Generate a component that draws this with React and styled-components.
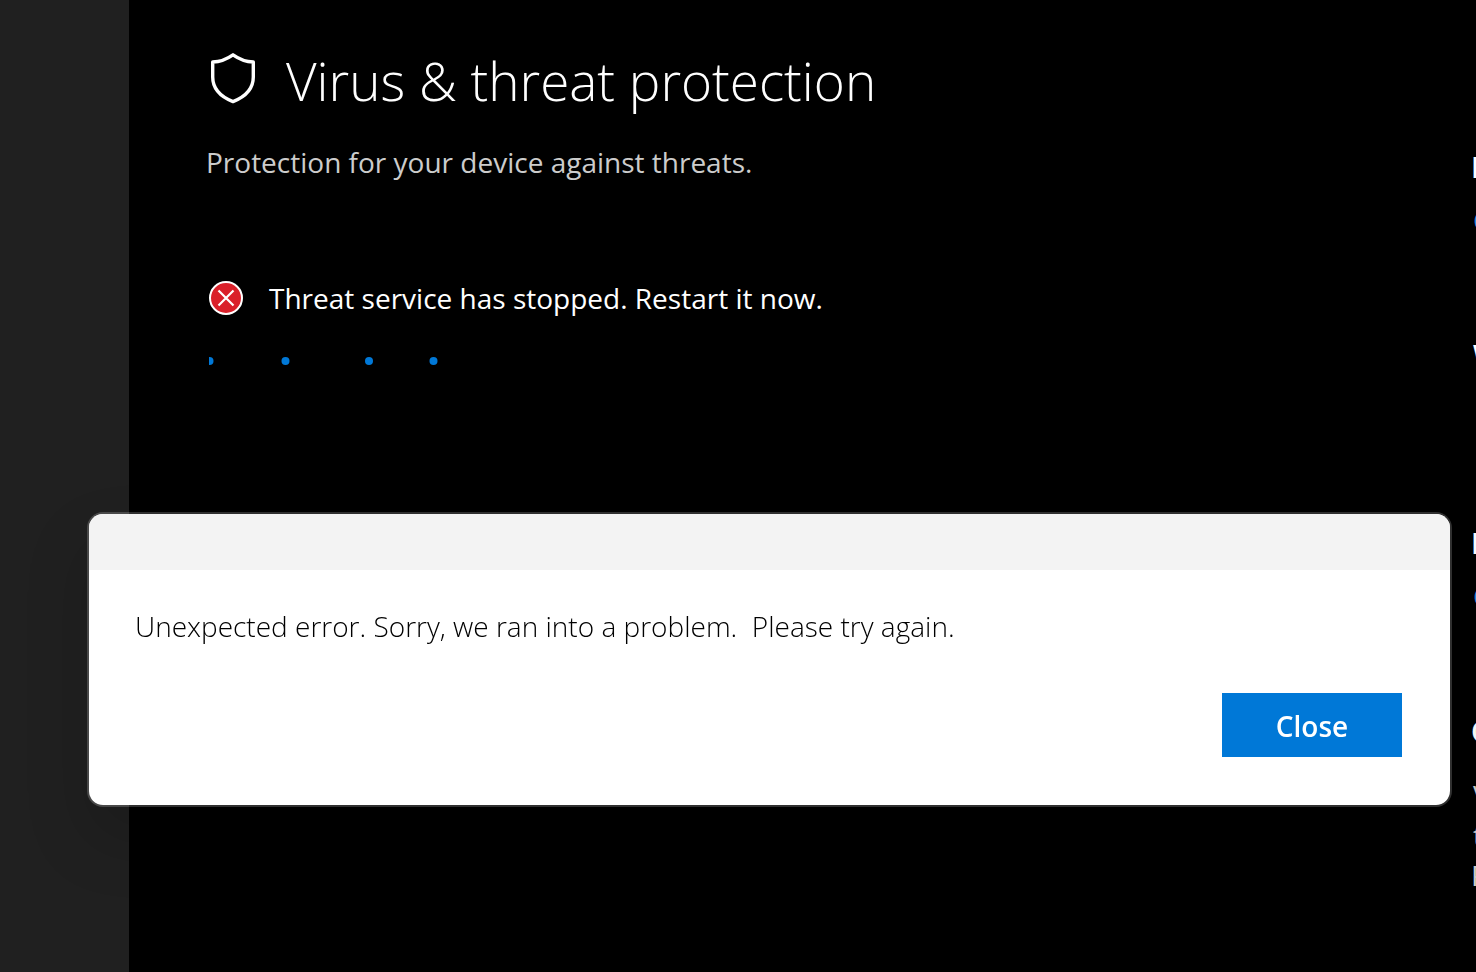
import React from "react";
import styled, { createGlobalStyle } from "styled-components";
import { useState } from "react";

const GlobalStyle = createGlobalStyle`
  * {
    box-sizing: border-box;
  }
  body {
    margin: 0;
    background: #000000;
    color: #ffffff;
    font-family: "Open Sans", "Noto Sans", sans-serif;
  }
  h1, p {
    margin: 0;
    font-weight: 400;
  }
`;

const Page = styled.div`
  display: flex;
  height: 100vh;
  overflow: hidden;
`;
const Sidebar = styled.nav`
  flex: none;
  width: 129px;
  background: #202020;
`;
const Main = styled.main`
  flex: 1;
  min-width: 0;
  padding: 40px 0 0 77px;
`;
const Header = styled.header`
  display: flex;
  align-items: center;
  gap: 26px;
  height: 80px;
`;
const Title = styled.h1`
  && {
    font-weight: 300;
  }
  padding-top: 2px;
  font-size: 53px;
  line-height: 80px;
  white-space: nowrap;
`;
const Subtitle = styled.p`
  margin-top: 22px;
  font-size: 28px;
  line-height: 40px;
  color: #cccccc;
`;
const Status = styled.section`
  margin-top: 96px;
  padding-left: 2px;
`;
const StatusRow = styled.div`
  display: flex;
  align-items: center;
  gap: 25px;
`;
const StatusText = styled.p`
  font-size: 28px;
  line-height: 40px;
`;
const Progress = styled.svg`
  display: block;
  width: 100%;
  height: 8px;
  margin: 39px 0 0 1px;
`;

const Aside = styled.aside`
  flex: none;
  width: 5px;
  padding-top: 147px;
  overflow: hidden;
`;
const AsideItem = styled.div`
  height: 40px;
  margin-bottom: ${(props) => props.$after}px;
  padding-left: ${(props) => props.$indent || 0}px;
  font-size: 28px;
  font-weight: ${(props) => (props.$heading ? 600 : 400)};
  line-height: 40px;
  color: ${(props) =>
    props.$heading ? "#ffffff" : props.$link ? "#2a8fd8" : "#cccccc"};
`;

const Dialog = styled.div`
  position: fixed;
  top: 512px;
  left: 87px;
  right: 24px;
  border: 2px solid #ffffff30;
  border-radius: 16px;
  background: #ffffff;
  background-clip: padding-box;
  box-shadow: 0 32px 64px rgba(0, 0, 0, 0.16);
  overflow: hidden;
`;
const DialogBar = styled.div`
  height: 56px;
  background: #f3f3f3;
`;
const DialogBody = styled.div`
  display: flex;
  flex-direction: column;
  gap: 47px;
  padding: 36px 48px 48px 46px;
`;
const Message = styled.p`
  && {
    font-weight: 300;
  }
  font-size: 28px;
  line-height: 40px;
  color: #000000;
  white-space: pre-wrap;
`;
const CloseButton = styled.button`
  align-self: flex-end;
  width: 180px;
  height: 64px;
  padding: 2px 0 0;
  border: none;
  background: #0078d7;
  color: #ffffff;
  font-family: inherit;
  font-size: 28px;
  font-weight: 600;
  cursor: pointer;
`;

const asideItems = [
  { text: "H", heading: true, after: 13 },
  { text: "G", link: true, indent: 2, after: 95 },
  { text: "W", heading: true, indent: 2, after: 148 },
  { text: "H", heading: true, after: 13 },
  { text: "G", link: true, indent: 2, after: 95 },
  { text: "C", heading: true, after: 24 },
  { text: "V", indent: 2, after: 0 },
  { text: "t", indent: 2, after: 0 },
  { text: "P", after: 0 },
];

function Shield() {
  return (
    <svg width="54" height="54" viewBox="0 0 54 54" fill="none" aria-hidden="true">
      <path
        d="M27 1.8C21 6 13.5 8.8 6.7 9V24C6.7 35.5 14 43.5 27 48.6C40 43.5 47.3 35.5 47.3 24V9C40.5 8.8 33 6 27 1.8Z"
        stroke="#ffffff"
        strokeWidth="3.4"
        strokeLinejoin="round"
      />
    </svg>
  );
}

function ErrorIcon() {
  return (
    <svg width="36" height="36" viewBox="0 0 36 36" aria-hidden="true">
      <circle cx="18" cy="18" r="16" fill="#da202a" stroke="#ffffff" strokeWidth="2" />
      <path d="M10.5 10.5L25.5 25.5M25.5 10.5L10.5 25.5" stroke="#ffffff" strokeWidth="2.2" />
    </svg>
  );
}

export default function App() {
  const [open, setOpen] = useState(true);

  return (
    <>
      <GlobalStyle />
      <Page>
        <Sidebar />
        <Main>
          <Header>
            <Shield />
            <Title>Virus &amp; threat protection</Title>
          </Header>
          <Subtitle>Protection for your device against threats.</Subtitle>
          <Status>
            <StatusRow>
              <ErrorIcon />
              <StatusText>Threat service has stopped. Restart it now.</StatusText>
            </StatusRow>
            <Progress role="progressbar" aria-label="Restarting">
              {[0.5, 76.5, 160, 224.5].map((x) => (
                <circle key={x} cx={x} cy="4" r="4" fill="#0078d7" />
              ))}
            </Progress>
          </Status>
        </Main>
        <Aside>
          {asideItems.map((item, index) => (
            <AsideItem
              key={index}
              $heading={item.heading}
              $link={item.link}
              $indent={item.indent}
              $after={item.after}
            >
              {item.text}
            </AsideItem>
          ))}
        </Aside>
      </Page>

      {open && (
        <Dialog role="dialog" aria-labelledby="message">
          <DialogBar />
          <DialogBody>
            <Message id="message">
              {"Unexpected error. Sorry, we ran into a problem.  Please try again."}
            </Message>
            <CloseButton onClick={() => setOpen(false)}>Close</CloseButton>
          </DialogBody>
        </Dialog>
      )}
    </>
  );
}
